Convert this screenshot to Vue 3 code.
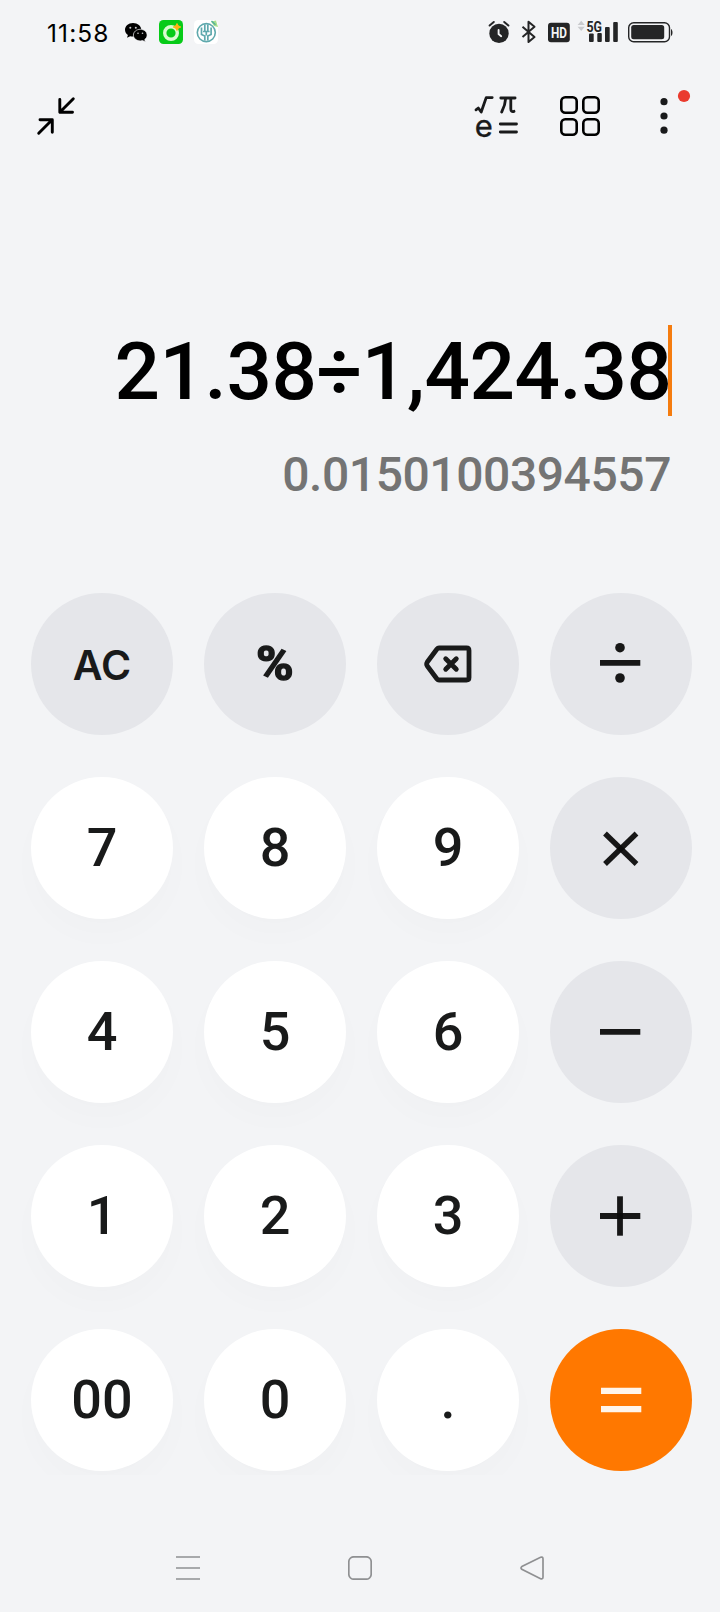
<template>
  <div class="phone">
    <!-- 状态栏 -->
    <div class="status-bar">
      <span class="time">11:58</span>
      <svg class="wechat" width="24" height="24" viewBox="0 0 24 24">
        <path d="M9 3C4.300 3 1 6 1 9.800c0 2.200 1.100 4 2.900 5.200L3 17.800l3.200-1.600c.9.300 1.800.4 2.800.4 4.700 0 8.300-3 8.300-6.800S13.700 3 9 3z" fill="#000" />
        <path d="M16.300 9.300c-3.900 0-6.900 2.600-6.900 5.800s3 5.800 6.900 5.800c.8 0 1.600-.1 2.400-.3l2.700 1.400-.7-2.400c1.500-1.100 2.400-2.700 2.400-4.500 0-3.200-2.900-5.800-6.800-5.800z" fill="#000" stroke="#f3f4f6" stroke-width=".7" />
        <g fill="#c9cacc">
          <circle cx="6.300" cy="7.800" r="1" />
          <circle cx="11.800" cy="7.800" r="1" />
          <circle cx="14" cy="13.300" r=".8" />
          <circle cx="18.500" cy="13.300" r=".8" />
        </g>
      </svg>
      <svg class="green-app" width="24" height="24" viewBox="0 0 24 24">
        <rect width="24" height="24" rx="4.500" fill="#07cb18" />
        <circle cx="12" cy="13" r="6.300" fill="none" stroke="#d9fbd0" stroke-width="3.400" />
        <path d="M18 3.500l1.300 2.300 2.500 1.200-2.500 1.200L18 10.500l-1.300-2.300L14.200 7l2.500-1.200z" fill="#ffb413" stroke="#ffb413" />
      </svg>
      <svg class="bank-app" width="24" height="24" viewBox="0 0 24 24">
        <rect width="24" height="24" rx="4.500" fill="#fff" />
        <circle cx="12.300" cy="12.600" r="9" fill="none" stroke="#5fa9ad" stroke-width="1.600" />
        <path d="M10.800 4.500v7M13.800 4.500v7M7.500 7.500v7l3.300 1.600v4.400M17.100 7.500v7l-3.300 1.600v4.400M9 11.500h6.600M12.300 11.500v4" fill="none" stroke="#5fa9ad" stroke-width="1.700" />
        <path d="M17 1.500l5-1 2 6.500-4-1z" fill="#a6df8c" />
        <path d="M17.500 1l4 3.800" stroke="#4fae9c" stroke-width="1.300" />
      </svg>

      <svg class="status-icons" width="190" height="30" viewBox="485 18 190 30">
        <!-- 闹钟 -->
        <g fill="none" stroke="#242526" stroke-linecap="round">
          <circle cx="499" cy="33.400" r="9.700" fill="#242526" stroke="none" />
          <path d="M489.600 25.500l4.200-3.500M508.400 25.500l-4.200-3.500" stroke-width="2" />
          <path d="M498.600 30v4l2.600 2.200" stroke="#f3f4f6" stroke-width="1.900" />
        </g>
        <!-- 蓝牙 -->
        <path d="M522.500 26.800l12 10.200-6 5V21.800l6 5-12 10.200" fill="none" stroke="#242526" stroke-width="2" stroke-linejoin="round" />
        <!-- HD -->
        <rect x="548" y="22.700" width="21.800" height="19.600" rx="3" fill="#242526" />
        <text class="hd" x="551" y="37.600" textLength="16" lengthAdjust="spacingAndGlyphs">HD</text>
        <!-- 信号 -->
        <path d="M581.200 20.800l3.600 4.200h-7.200zM581.200 31l3.600-4.200h-7.200z" fill="#c9cacd" />
        <text class="net" x="586.500" y="31.500" textLength="15.500" lengthAdjust="spacingAndGlyphs">5G</text>
        <g fill="#242526">
          <rect x="589" y="33.500" width="4.700" height="8.500" rx="1" />
          <rect x="597.300" y="33" width="4.500" height="9" rx="1" />
          <rect x="605" y="27" width="4.700" height="15" rx="1" />
          <rect x="613.200" y="22" width="4.600" height="20" rx="1" />
        </g>
        <!-- 电池 -->
        <rect x="628.700" y="22.700" width="40.800" height="19" rx="5" fill="none" stroke="#242526" stroke-width="1.400" />
        <rect x="631.200" y="25" width="33" height="14.200" rx="2.500" fill="#242526" />
        <path d="M671 29c2 1 2 6 0 7z" fill="#242526" />
      </svg>
    </div>

    <!-- 工具栏 -->
    <div class="toolbar">
      <svg class="shrink" width="40" height="40" viewBox="36 96 40 40">
        <path d="M38.700 133.300l13.500-13.500M40 119.800h12.300v12.400M73.300 98.700l-13.500 13.500M59.800 99.500v12.700h12.700" fill="none" stroke="#000" stroke-width="2.900" stroke-linecap="round" stroke-linejoin="round" />
      </svg>
      <svg class="science" width="54" height="54" viewBox="469 89 54 54">
        <g fill="none" stroke="#191a1b" stroke-width="2.800" stroke-linecap="round" stroke-linejoin="round">
          <path d="M476 109.800l2.300-1.800 2.900 4 5-14.400h6" />
          <path d="M500.800 98h14.300M505.700 98.200q-.4 7-4 13.800M510.800 98.200v10.500q0 3.600 3.200 2.600" />
          <path d="M500.300 124h16.200M500.300 132h16.200" />
        </g>
        <text class="euler" x="474.800" y="136.600">e</text>
      </svg>
      <svg class="grid-icon" width="40" height="40" viewBox="0 0 40 40">
        <g fill="none" stroke="#000" stroke-width="2.600">
          <rect x="1.300" y="1.300" width="15.400" height="15.400" rx="4" />
          <rect x="23.300" y="1.300" width="15.400" height="15.400" rx="4" />
          <rect x="1.300" y="23.300" width="15.400" height="15.400" rx="4" />
          <rect x="23.300" y="23.300" width="15.400" height="15.400" rx="4" />
        </g>
      </svg>
      <svg class="more" width="32" height="48" viewBox="660 88 32 48">
        <g fill="#191a1b">
          <circle cx="664" cy="101.700" r="3.600" />
          <circle cx="664" cy="116" r="3.600" />
          <circle cx="664" cy="130.200" r="3.600" />
        </g>
        <circle cx="684" cy="96" r="6.100" fill="#ea3b2e" />
      </svg>
    </div>

    <!-- 显示区域 -->
    <div class="display">
      <div class="expression">
        <span>{{ expression }}</span>
        <i class="cursor"></i>
      </div>
      <div class="result">{{ result }}</div>
    </div>

    <!-- 键盘 -->
    <div class="keypad">
      <button v-for="key in keys" :key="key.id" class="key" :class="key.type" @click="press(key.id)">
        <svg v-if="key.icon" width="142" height="142" viewBox="0 0 142 142" fill="none" stroke="currentColor">
          <path v-for="d in key.icon" :key="d" :d="d" :stroke-width="key.stroke || 5.800" :stroke-linecap="key.cap" stroke-linejoin="round" />
          <circle v-for="y in key.dots" :key="y" cx="70" :cy="y" r="4.800" fill="currentColor" stroke="none" />
        </svg>
        <span v-else>{{ key.id }}</span>
      </button>
    </div>

    <!-- 导航栏 -->
    <div class="nav-bar">
      <svg width="24" height="24" viewBox="0 0 24 24">
        <path d="M0 1h24M0 12h24M0 23h24" />
      </svg>
      <svg width="24" height="24" viewBox="0 0 24 24">
        <rect x=".8" y=".8" width="22.400" height="22.400" rx="5" />
      </svg>
      <svg width="24" height="24" viewBox="0 0 24 24">
        <path d="M1.800 10.600L20.600 1.200Q23 .5 23 3v18q0 2.500-2.400 1.700L1.800 13.300Q.2 12 1.800 10.600z" />
      </svg>
    </div>
  </div>
</template>

<script setup>
import { ref } from 'vue';

const expression = ref('21.38÷1,424.38');
const result = ref('0.0150100394557');

// 按键列表，icon 为描边路径
const keys = [
  { id: 'AC', type: 'gray ac' },
  { id: '%', type: 'gray percent' },
  {
    id: 'del',
    type: 'gray',
    stroke: 4.8,
    cap: 'round',
    icon: [
      'M62 55H89.500Q92 55 92 57.500V84.500Q92 87 89.500 87H62Q60.800 87 60 86L50.300 73Q49 71 50.300 69L60 56Q60.800 55 62 55z',
      'M68.700 65.700L79.300 76.300M79.300 65.700L68.700 76.300',
    ],
  },
  { id: '÷', type: 'gray op', icon: ['M50 69.800H90.300'], dots: [54.7, 85] },
  { id: '7', type: 'white' },
  { id: '8', type: 'white' },
  { id: '9', type: 'white' },
  { id: '×', type: 'gray op', icon: ['M55 56.500L86.500 87', 'M86.500 56.500L55 87'], stroke: 5.4 },
  { id: '4', type: 'white' },
  { id: '5', type: 'white' },
  { id: '6', type: 'white' },
  { id: '-', type: 'gray op', icon: ['M50 70.900H90.300'] },
  { id: '1', type: 'white' },
  { id: '2', type: 'white' },
  { id: '3', type: 'white' },
  { id: '+', type: 'gray op', icon: ['M50 71H90.300', 'M70 51.300V90.700'] },
  { id: '00', type: 'white' },
  { id: '0', type: 'white' },
  { id: '.', type: 'white' },
  { id: '=', type: 'orange', icon: ['M51 61.900H91.300', 'M51 80.200H91.300'], stroke: 6.2 },
];

// 处理按键
const press = (id) => {
  if (id === 'AC') {
    expression.value = '';
    result.value = '';
  } else if (id === 'del') {
    expression.value = expression.value.slice(0, -1);
  } else if (id === '=') {
    expression.value = result.value;
  } else {
    expression.value += id;
  }
};
</script>

<style>
body {
  margin: 0;
  background: #f3f4f6;
}
</style>

<style scoped>
.phone {
  display: flex;
  flex-direction: column;
  width: 720px;
  height: 1612px;
  overflow: hidden;
  background: #f3f4f6;
  font-family: Roboto, "Noto Sans CJK SC", sans-serif;
}

svg {
  display: block;
  flex: none;
}

.status-bar {
  display: flex;
  align-items: center;
  height: 64px;
  padding: 0 45px 0 47px;
}

.time {
  width: 77px;
  font-family: Inter, sans-serif;
  font-size: 24.500px;
  line-height: 30px;
  letter-spacing: 1.100px;
  padding-top: 2px;
  color: #000;
}

.green-app {
  margin-left: 11px;
}

.bank-app {
  margin-left: 11px;
}

.status-icons {
  margin-left: auto;
  margin-top: 2px;
}

.hd {
  font: 700 14px Roboto, sans-serif;
  fill: #f3f4f6;
}

.net {
  font: 700 15.500px Roboto, sans-serif;
  fill: #242526;
}

.toolbar {
  display: flex;
  align-items: center;
  height: 104px;
  padding: 0 28px 0 36px;
}

.science {
  margin-left: auto;
}

.euler {
  font: 400 31px Inter, sans-serif;
  fill: #191a1b;
  stroke: #191a1b;
  stroke-width: 0.400;
}

.grid-icon {
  margin-left: 37px;
}

.more {
  margin-left: 60px;
  margin-bottom: 8px;
}

.display {
  height: 425px;
  padding-right: 49px;
  box-sizing: border-box;
  padding-top: 157px;
  font-weight: 500;
  text-align: right;
}

.expression {
  display: flex;
  justify-content: flex-end;
  height: 91px;
  margin-right: -1px;
  font-size: 80px;
  line-height: 95px;
  letter-spacing: -0.400px;
  color: #000;
}

.cursor {
  width: 4px;
  height: 91px;
  margin-left: -3.600px;
  background: #f57c0f;
}

.result {
  margin-top: 31px;
  font-size: 48px;
  line-height: 56px;
  letter-spacing: -0.430px;
  color: #747474;
}

.keypad {
  display: grid;
  grid-template-columns: repeat(4, 142px);
  grid-auto-rows: 142px;
  gap: 42px 31px;
  padding: 0 28px 4px 31px;
  clip-path: inset(0);
}

.key {
  display: flex;
  align-items: center;
  justify-content: center;
  padding: 0;
  border: 0;
  border-radius: 50%;
  font-family: inherit;
  font-size: 54px;
  font-weight: 500;
  line-height: 64px;
  color: #191a1a;
}

.white {
  background: #fff;
  box-shadow: 0 16px 32px rgba(40, 50, 60, 0.015);
}

.gray {
  background: #e5e6ea;
}

.op {
  color: rgba(10, 10, 10, 0.940);
}

.ac {
  padding-top: 2px;
  font-family: Inter, sans-serif;
  font-size: 41px;
  font-weight: 600;
}

.percent {
  font-size: 48px;
  font-weight: 700;
  -webkit-text-stroke: 1.400px #191a1a;
}

.percent span {
  transform: scaleX(1.060);
}

.orange {
  background: #ff7800;
  color: #fff5ea;
}

.nav-bar {
  display: flex;
  justify-content: space-between;
  padding: 81px 176px 0;
}

.nav-bar svg {
  fill: none;
  stroke: #8f9092;
  stroke-width: 1.700;
}
</style>
